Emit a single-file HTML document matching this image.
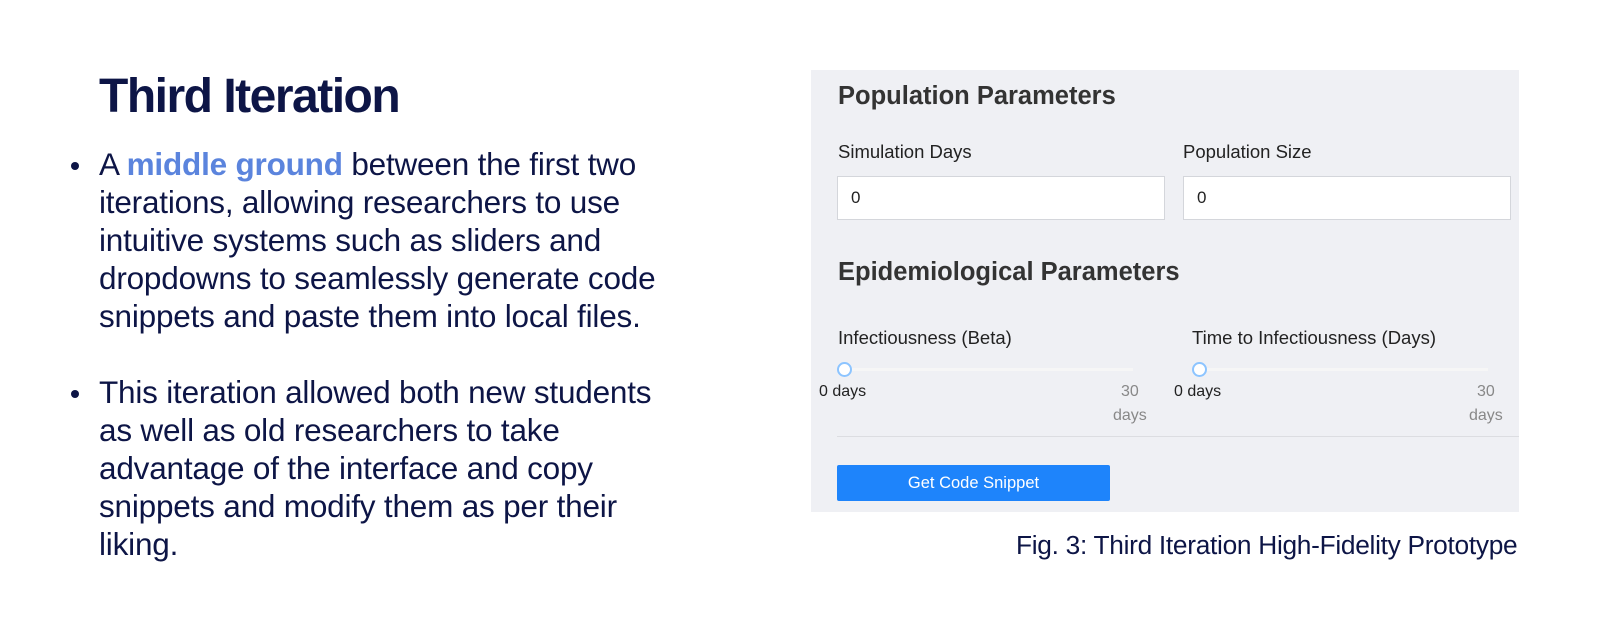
<!DOCTYPE html>
<html><head><style>
body{margin:0;width:1599px;height:642px;background:#fff;position:relative;overflow:hidden;font-family:"Liberation Sans",Arial,sans-serif;color:#0d1546}
.a{position:absolute;white-space:nowrap}
h1{position:absolute;left:99px;top:69px;margin:0;font-size:48px;font-weight:bold;letter-spacing:-1.5px}
.b{position:absolute;left:99px;font-size:31.5px;line-height:38px;letter-spacing:-0.2px;white-space:nowrap}
.dot{position:absolute;left:71px;width:8px;height:8px;border-radius:50%;background:#0d1546}
.hl{color:#5b84dd;font-weight:bold}
.p{position:absolute;left:811px;top:70px;width:708px;height:442px;background:#eff0f4;color:#222}
.p .a{font-size:18.5px}
.in{position:absolute;height:44px;background:#fff;border:1px solid #d4d6db;box-sizing:border-box;font-size:17px;padding:0 13px;line-height:42px}
.track{position:absolute;height:3px;background:#f6f6f6}
.knob{position:absolute;width:11px;height:11px;border:2px solid #8cc4ff;border-radius:50%;background:#fff}
</style></head><body>
<h1>Third Iteration</h1>
<div class="dot" style="top:162px"></div>
<div class="b" style="top:145px">A <span class="hl">middle ground</span> between the first two<br>iterations, allowing researchers to use<br>intuitive systems such as sliders and<br>dropdowns to seamlessly generate code<br>snippets and paste them into local files.</div>
<div class="dot" style="top:390px"></div>
<div class="b" style="top:373px">This iteration allowed both new students<br>as well as old researchers to take<br>advantage of the interface and copy<br>snippets and modify them as per their<br>liking.</div>
<div class="p">
<div class="a" style="left:27px;top:12px;font-size:25.5px;font-weight:bold;color:#333">Population Parameters</div>
<div class="a" style="left:27px;top:71px">Simulation Days</div>
<div class="a" style="left:372px;top:71px">Population Size</div>
<div class="in" style="left:26px;top:106px;width:328px">0</div>
<div class="in" style="left:372px;top:106px;width:328px">0</div>
<div class="a" style="left:27px;top:188px;font-size:25.5px;font-weight:bold;color:#333">Epidemiological Parameters</div>
<div class="a" style="left:27px;top:257px">Infectiousness (Beta)</div>
<div class="a" style="left:381px;top:257px">Time to Infectiousness (Days)</div>
<div class="track" style="left:30px;top:298px;width:292px"></div>
<div class="track" style="left:385px;top:298px;width:292px"></div>
<div class="knob" style="left:26px;top:292px"></div>
<div class="knob" style="left:381px;top:292px"></div>
<div class="a" style="left:8px;top:313px;font-size:16px">0 days</div>
<div class="a" style="left:363px;top:313px;font-size:16px">0 days</div>
<div class="a" style="left:302px;top:310px;font-size:16px;color:#888;text-align:center;line-height:24px">30<br>days</div>
<div class="a" style="left:658px;top:310px;font-size:16px;color:#888;text-align:center;line-height:24px">30<br>days</div>
<div style="position:absolute;left:26px;top:366px;width:682px;height:1px;background:#dcdde1"></div>
<div style="position:absolute;left:26px;top:395px;width:273px;height:36px;background:#1e84fb;color:#fff;font-size:16.5px;text-align:center;line-height:36px;border-radius:2px">Get Code Snippet</div>
</div>
<div class="a" style="left:1016px;top:530px;font-size:26.3px;letter-spacing:-0.3px">Fig. 3: Third Iteration High-Fidelity Prototype</div>
</body></html>
